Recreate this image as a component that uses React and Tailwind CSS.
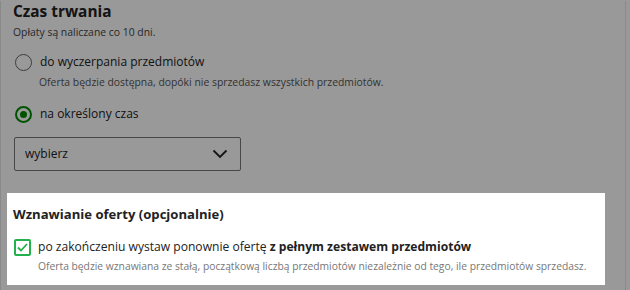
import React from "react";

export default function App() {
  return (
    <div className="relative w-[630px] h-[290px] overflow-hidden bg-white" style={{ fontFamily: '"Open Sans", sans-serif' }}>
      <div className="relative h-full w-[626px] border-x border-[#e6e6e6] pl-[12px] text-[#222]">
        <div className="h-[22px] mt-[1px] text-[15.4px] font-bold leading-[22px]">Czas trwania</div>
        <div className="h-[17px] mt-[1px] text-[10.4px] leading-[17px] text-[#444]">Opłaty są naliczane co 10 dni.</div>

        <div className="mt-[13px] flex items-center h-[16px]">
          <span className="w-[17px] h-[17px] rounded-full border-[1.5px] border-[#666] bg-white ml-[2px]" />
          <span className="ml-[8px] text-[12px] leading-[20px]">do wyczerpania przedmiotów</span>
        </div>
        <div className="ml-[26px] mt-[4px] h-[16px] text-[10.4px] leading-[16px] text-[#555]">
          Oferta będzie dostępna, dopóki nie sprzedasz wszystkich przedmiotów.
        </div>

        <div className="mt-[16px] flex items-center h-[16px]">
          <span className="w-[17px] h-[17px] rounded-full border-2 border-[#008a00] bg-white ml-[2px] flex items-center justify-center">
            <span className="w-[7px] h-[7px] rounded-full bg-[#008a00]" />
          </span>
          <span className="ml-[8px] text-[12px] leading-[20px]">na określony czas</span>
        </div>

        <div className="mt-[15px] ml-[1px] w-[227px] h-[34px] border border-[#777] rounded-[2px] bg-white flex items-center justify-between pl-[10px] pr-[12px]">
          <span className="text-[12px]">wybierz</span>
          <svg width="16" height="10" viewBox="0 0 16 10" fill="none" stroke="#222" strokeWidth="1.8">
            <path d="M1.5 1.5 L8 8 L14.5 1.5" />
          </svg>
        </div>
      </div>

      <div className="absolute inset-0 bg-black/40" />

      <div className="absolute left-[7px] top-[193px] w-[598px] h-[92px] bg-white pl-[6px] text-[#222]">
        <div className="mt-[11px] text-[13.1px] font-bold leading-[20px]">Wznawianie oferty (opcjonalnie)</div>
        <div className="mt-[14px] flex items-center h-[18px]">
          <span className="w-[17px] h-[17px] ml-[1px] border-2 border-[#22b14c] rounded-[2px] flex items-center justify-center">
            <svg width="11" height="9" viewBox="0 0 11 9" fill="none" stroke="#22b14c" strokeWidth="1.8">
              <path d="M1 4.5 L4 7.5 L10 1" />
            </svg>
          </span>
          <span className="ml-[7px] text-[12.1px] leading-[18px]">
            po zakończeniu wystaw ponownie ofertę <b className="font-bold">z pełnym zestawem przedmiotów</b>
          </span>
        </div>
        <div className="ml-[25px] mt-[2px] text-[10.3px] leading-[16px] text-[#777] whitespace-nowrap">
          Oferta będzie wznawiana ze stałą, początkową liczbą przedmiotów niezależnie od tego, ile przedmiotów sprzedasz.
        </div>
      </div>
    </div>
  );
}
